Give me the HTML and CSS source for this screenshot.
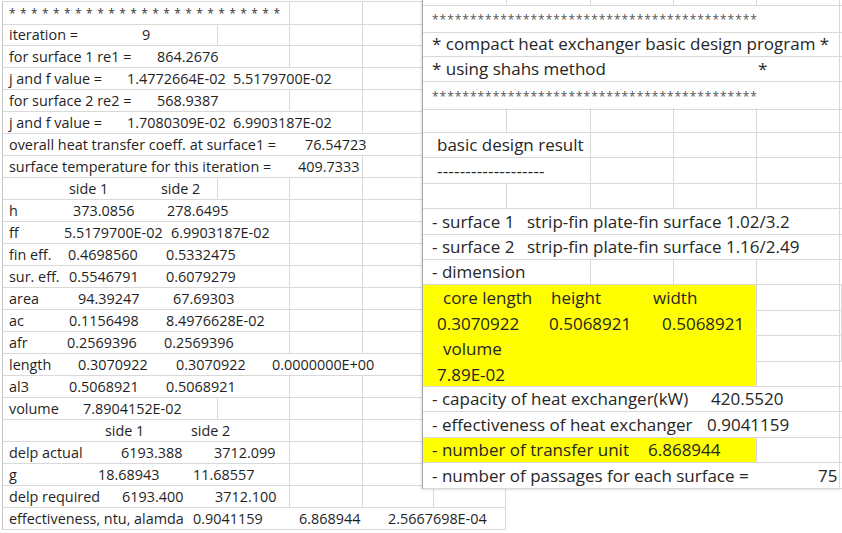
FILE: index.html
```html
<!DOCTYPE html>
<html>
<head>
<meta charset="utf-8">
<link rel="stylesheet" href="styles.css">
</head>
<body>
<div class="stage">
  <div class="sheet">
    <div class="row"><div class="c txt s4"><span class="stars">* * * * * * * * * * * * * * * * * * * * * * * * *</span></div><div class="c"></div><div class="c"></div><div class="c"></div></div>
    <div class="row"><div class="c txt s3"><span class="t" style="width:133px">iteration =</span><span class="t">9</span></div><div class="c"></div><div class="c"></div><div class="c"></div><div class="c"></div></div>
    <div class="row"><div class="c txt s4"><span class="t" style="width:148px">for surface 1 re1 =</span><span class="t">864.2676</span></div><div class="c"></div><div class="c"></div><div class="c"></div></div>
    <div class="row"><div class="c txt s5"><span class="t" style="width:118px">j and f value =</span><span class="t" style="width:106px">1.4772664E-02</span><span class="t">5.5179700E-02</span></div><div class="c"></div><div class="c"></div></div>
    <div class="row"><div class="c txt s4"><span class="t" style="width:148px">for surface 2 re2 =</span><span class="t">568.9387</span></div><div class="c"></div><div class="c"></div><div class="c"></div></div>
    <div class="row"><div class="c txt s5"><span class="t" style="width:118px">j and f value =</span><span class="t" style="width:106px">1.7080309E-02</span><span class="t">6.9903187E-02</span></div><div class="c"></div><div class="c"></div></div>
    <div class="row"><div class="c txt s6"><span class="t" style="width:296px">overall heat transfer coeff. at surface1 =</span><span class="t">76.54723</span></div><div class="c"></div></div>
    <div class="row"><div class="c txt s5"><span class="t" style="width:289px">surface temperature for this iteration =</span><span class="t">409.7333</span></div><div class="c"></div><div class="c"></div></div>
    <div class="row"><div class="c txt s3"><span class="t" style="width:60px"></span><span class="t" style="width:92px">side 1</span><span class="t">side 2</span></div><div class="c"></div><div class="c"></div><div class="c"></div><div class="c"></div></div>
    <div class="row"><div class="c txt s4"><span class="t" style="width:64px">h</span><span class="t" style="width:94px">373.0856</span><span class="t">278.6495</span></div><div class="c"></div><div class="c"></div><div class="c"></div></div>
    <div class="row"><div class="c txt s4"><span class="t" style="width:55px">ff</span><span class="t" style="width:107px">5.5179700E-02</span><span class="t">6.9903187E-02</span></div><div class="c"></div><div class="c"></div><div class="c"></div></div>
    <div class="row"><div class="c txt s4"><span class="t" style="width:59px">fin eff.</span><span class="t" style="width:98px">0.4698560</span><span class="t">0.5332475</span></div><div class="c"></div><div class="c"></div><div class="c"></div></div>
    <div class="row"><div class="c txt s4"><span class="t" style="width:60px">sur. eff.</span><span class="t" style="width:97px">0.5546791</span><span class="t">0.6079279</span></div><div class="c"></div><div class="c"></div><div class="c"></div></div>
    <div class="row"><div class="c txt s4"><span class="t" style="width:69px">area</span><span class="t" style="width:95px">94.39247</span><span class="t">67.69303</span></div><div class="c"></div><div class="c"></div><div class="c"></div></div>
    <div class="row"><div class="c txt s4"><span class="t" style="width:60px">ac</span><span class="t" style="width:97px">0.1156498</span><span class="t">8.4976628E-02</span></div><div class="c"></div><div class="c"></div><div class="c"></div></div>
    <div class="row"><div class="c txt s4"><span class="t" style="width:58px">afr</span><span class="t" style="width:97px">0.2569396</span><span class="t">0.2569396</span></div><div class="c"></div><div class="c"></div><div class="c"></div></div>
    <div class="row"><div class="c txt s6"><span class="t" style="width:69px">length</span><span class="t" style="width:98px">0.3070922</span><span class="t" style="width:96px">0.3070922</span><span class="t">0.0000000E+00</span></div><div class="c"></div></div>
    <div class="row"><div class="c txt s4"><span class="t" style="width:60px">al3</span><span class="t" style="width:97px">0.5068921</span><span class="t">0.5068921</span></div><div class="c"></div><div class="c"></div><div class="c"></div></div>
    <div class="row"><div class="c txt s3"><span class="t" style="width:74px">volume</span><span class="t">7.8904152E-02</span></div><div class="c"></div><div class="c"></div><div class="c"></div><div class="c"></div></div>
    <div class="row"><div class="c txt s4"><span class="t" style="width:96px"></span><span class="t" style="width:86px">side 1</span><span class="t">side 2</span></div><div class="c"></div><div class="c"></div><div class="c"></div></div>
    <div class="row"><div class="c txt s4"><span class="t" style="width:112px">delp actual</span><span class="t" style="width:93px">6193.388</span><span class="t">3712.099</span></div><div class="c"></div><div class="c"></div><div class="c"></div></div>
    <div class="row"><div class="c txt s4"><span class="t" style="width:89px">g</span><span class="t" style="width:95px">18.68943</span><span class="t">11.68557</span></div><div class="c"></div><div class="c"></div><div class="c"></div></div>
    <div class="row"><div class="c txt s4"><span class="t" style="width:113px">delp required</span><span class="t" style="width:93px">6193.400</span><span class="t">3712.100</span></div><div class="c"></div><div class="c"></div><div class="c"></div></div>
    <div class="row"><div class="c txt s7"><span class="t" style="width:184px">effectiveness, ntu, alamda</span><span class="t" style="width:106px">0.9041159</span><span class="t" style="width:89px">6.868944</span><span class="t">2.5667698E-04</span></div></div>
  </div>

  <div class="win">
    <div class="wrow top"><div class="c"></div><div class="c"></div><div class="c"></div><div class="c"></div><div class="c"></div><div class="c"></div></div>
    <div class="wrow"><div class="c wtxt s5"><span class="wstars">*******************************************</span></div><div class="c"></div></div>
    <div class="wrow h26"><div class="c wtxt s5"><span class="t">* compact heat exchanger basic design program *</span></div><div class="c"></div></div>
    <div class="wrow"><div class="c wtxt s5"><span class="t" style="width:326px">* using shahs method</span><span class="t">*</span></div><div class="c"></div></div>
    <div class="wrow h26"><div class="c wtxt s5"><span class="wstars">*******************************************</span></div><div class="c"></div></div>
    <div class="wrow"><div class="c"></div><div class="c"></div><div class="c"></div><div class="c"></div><div class="c"></div><div class="c"></div></div>
    <div class="wrow"><div class="c wtxt s2"><span class="t in5">basic design result</span></div><div class="c"></div><div class="c"></div><div class="c"></div><div class="c"></div></div>
    <div class="wrow h26"><div class="c wtxt s2"><span class="t in5 dashes">-------------------</span></div><div class="c"></div><div class="c"></div><div class="c"></div><div class="c"></div></div>
    <div class="wrow"><div class="c"></div><div class="c"></div><div class="c"></div><div class="c"></div><div class="c"></div><div class="c"></div></div>
    <div class="wrow h26"><div class="c wtxt s5"><span class="t" style="width:95px">- surface 1</span><span class="t">strip-fin plate-fin surface 1.02/3.2</span></div><div class="c"></div></div>
    <div class="wrow"><div class="c wtxt s5"><span class="t" style="width:95px">- surface 2</span><span class="t">strip-fin plate-fin surface 1.16/2.49</span></div><div class="c"></div></div>
    <div class="wrow"><div class="c wtxt s2"><span class="t">- dimension</span></div><div class="c"></div><div class="c"></div><div class="c"></div><div class="c"></div></div>
    <div class="wgroup">
      <div class="yblock">
        <div class="yl h26"><span class="t" style="width:108px;margin-left:11px">core length</span><span class="t" style="width:102px">height</span><span class="t">width</span></div>
        <div class="yl"><span class="t" style="width:112px;margin-left:5px">0.3070922</span><span class="t" style="width:113px">0.5068921</span><span class="t">0.5068921</span></div>
        <div class="yl h26"><span class="t" style="margin-left:11px">volume</span></div>
        <div class="yl"><span class="t" style="margin-left:5px">7.89E-02</span></div>
      </div>
      <div class="c"></div><div class="c"></div>
      <div class="c"></div><div class="c"></div>
      <div class="c"></div><div class="c"></div>
      <div class="c"></div><div class="c"></div>
    </div>
    <div class="wrow"><div class="c wtxt s5"><span class="t" style="width:279px">- capacity of heat exchanger(kW)</span><span class="t">420.5520</span></div><div class="c"></div></div>
    <div class="wrow h26"><div class="c wtxt s5"><span class="t" style="width:275px">- effectiveness of heat exchanger</span><span class="t">0.9041159</span></div><div class="c"></div></div>
    <div class="wrow"><div class="c wtxt s4 yellow"><span class="t" style="width:216px">- number of transfer unit</span><span class="t">6.868944</span></div><div class="c"></div><div class="c"></div></div>
    <div class="wrow h26"><div class="c wtxt s5"><span class="t" style="width:386px">- number of passages for each surface =</span><span class="t">75</span></div><div class="c"></div></div>
  </div>
</div>
</body>
</html>
```
FILE: styles.css
```css
* { box-sizing: border-box; }
html, body { margin: 0; padding: 0; background: #fff; }
body {
  font-family: "Open Sans", "Noto Sans", "Noto Sans CJK KR", sans-serif;
  color: #1f1f1f;
}
.stage {
  position: relative;
  width: 842px;
  height: 533px;
  overflow: hidden;
}

/* left sheet */
.sheet {
  margin: 1px 0 0 2px;
  width: 504px;
  border-left: 1px solid #c4c4c4;
  border-top: 1px solid #d9d9d9;
  font-size: 14.4px;
}
.row {
  display: grid;
  grid-template-columns: 70px 73px 72px 72px 73px 71px 72px;
  height: 22px;
}
.c {
  border-right: 1px solid #d9d9d9;
  border-bottom: 1px solid #d9d9d9;
  min-width: 0;
}
.s2 { grid-column: span 2; }
.s3 { grid-column: span 3; }
.s4 { grid-column: span 4; }
.s5 { grid-column: span 5; }
.s6 { grid-column: span 6; }
.s7 { grid-column: span 7; }
.txt {
  padding-left: 6px;
  line-height: 21px;
  white-space: nowrap;
}
.t { display: inline-block; white-space: pre; }
.stars {
  display: inline-block;
  width: 271px;
  text-align: justify;
  text-align-last: justify;
  font-size: 12px;
  color: #333;
}

/* overlaid result window */
.win {
  position: absolute;
  left: 422px;
  top: 0;
  width: 420px;
  height: 489px;
  background: #fff;
  border-left: 1px solid #a8a8a8;
  box-shadow: -1px 1px 2px rgba(0, 0, 0, 0.12);
  font-size: 17px;
  color: #262626;
}
.wrow {
  display: grid;
  grid-template-columns: 84px 84px 83px 83px 83px 2px;
  height: 25px;
}
.wrow.h26 { height: 26px; }
.wrow.top { height: 6px; }
.wtxt {
  padding-left: 9px;
  line-height: 24px;
  white-space: nowrap;
}
.h26 .wtxt { line-height: 25px; }
.in5 { margin-left: 5px; }
.wstars {
  display: inline-block;
  font-size: 12px;
  letter-spacing: 0.97px;
  color: #555;
}
.dashes { letter-spacing: 0.2px; }
.yellow { background: #ffff00; }

.wgroup {
  display: grid;
  grid-template-columns: 334px 83px 2px;
  grid-template-rows: 26px 25px 26px 25px;
}
.yblock {
  grid-row: span 4;
  background: #ffff00;
  border-right: 1px solid #d9d9d9;
  border-bottom: 1px solid #d9d9d9;
  padding-left: 9px;
}
.yl {
  height: 25px;
  line-height: 25px;
  white-space: nowrap;
}
.yl.h26 { height: 26px; line-height: 26px; }
.win .c:last-child { border-right: 0; }
```
